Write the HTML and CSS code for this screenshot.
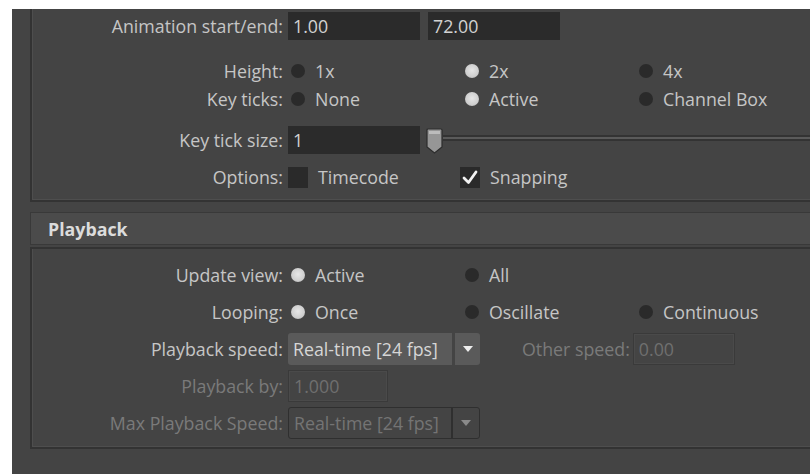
FILE: index.html
```html
<!DOCTYPE html>
<html lang="en">
<head>
<meta charset="utf-8">
<title>Time Slider Preferences</title>
<link rel="stylesheet" href="styles.css">
</head>
<body>
<div class="screen">
  <div class="frame frame-top">
    <div class="row r-anim">
      <span class="label">Animation start/end:</span>
      <div class="ctrl">
        <span class="field w132">1.00</span>
        <span class="field w132 ml8">72.00</span>
      </div>
    </div>
    <div class="row r-height">
      <span class="label">Height:</span>
      <div class="ctrl">
        <span class="choice"><i class="dot"></i>1x</span>
        <span class="choice"><i class="dot on"></i>2x</span>
        <span class="choice"><i class="dot"></i>4x</span>
      </div>
    </div>
    <div class="row">
      <span class="label">Key ticks:</span>
      <div class="ctrl">
        <span class="choice"><i class="dot"></i>None</span>
        <span class="choice"><i class="dot on"></i>Active</span>
        <span class="choice"><i class="dot"></i>Channel Box</span>
      </div>
    </div>
    <div class="row r-tick">
      <span class="label">Key tick size:</span>
      <div class="ctrl">
        <span class="field w132">1</span>
        <div class="slider">
          <svg class="handle" width="17" height="26" viewBox="0 0 17 26">
            <path d="M2 1 H15 Q16 1 16 2 V19 L8.5 25 L1 19 V2 Q1 1 2 1 Z" fill="#969696" stroke="#2c2c2c" stroke-width="1.2"/>
            <path d="M3 3 H14 V6 H3 Z" fill="#bcbcbc"/>
          </svg>
          <span class="track"></span>
        </div>
      </div>
    </div>
    <div class="row r-opts">
      <span class="label">Options:</span>
      <div class="ctrl">
        <span class="choice cb"><i class="check"></i>Timecode</span>
        <span class="choice cb"><i class="check">
          <svg width="20" height="21" viewBox="0 0 20 21"><path d="M4 11 L8.5 15.5 L16 5" fill="none" stroke="#f2f2f2" stroke-width="2.8" stroke-linecap="round" stroke-linejoin="round"/></svg>
        </i>Snapping</span>
      </div>
    </div>
  </div>

  <div class="section-head">Playback</div>

  <div class="frame frame-play">
    <div class="row pr">
      <span class="label">Update view:</span>
      <div class="ctrl">
        <span class="choice"><i class="dot on"></i>Active</span>
        <span class="choice"><i class="dot"></i>All</span>
      </div>
    </div>
    <div class="row pr">
      <span class="label">Looping:</span>
      <div class="ctrl">
        <span class="choice"><i class="dot on"></i>Once</span>
        <span class="choice"><i class="dot"></i>Oscillate</span>
        <span class="choice"><i class="dot"></i>Continuous</span>
      </div>
    </div>
    <div class="row pr">
      <span class="label">Playback speed:</span>
      <div class="ctrl">
        <span class="combo">
          <span class="combo-text">Real-time [24 fps]</span>
          <span class="combo-btn"><i class="arrow"></i></span>
        </span>
        <span class="label dim other">Other speed:</span>
        <span class="field off w102">0.00</span>
      </div>
    </div>
    <div class="row pr">
      <span class="label dim">Playback by:</span>
      <div class="ctrl">
        <span class="field off w100">1.000</span>
      </div>
    </div>
    <div class="row pr">
      <span class="label dim">Max Playback Speed:</span>
      <div class="ctrl">
        <span class="combo off">
          <span class="combo-text">Real-time [24 fps]</span>
          <span class="combo-btn"><i class="arrow"></i></span>
        </span>
      </div>
    </div>
  </div>
</div>
</body>
</html>
```

FILE: styles.css
```css
* { box-sizing: border-box; }

html, body {
  margin: 0;
  background: #ffffff;
  overflow: hidden;
}

.screen {
  margin: 9px 0 0 12px;
  height: 465px;
  background: #444444;
  overflow: hidden;
  font-family: "Open Sans", "Liberation Sans", sans-serif;
  font-size: 17.8px;
  color: #c6c6c6;
}

/* framed group boxes, open on the right where the window is cut */
.frame {
  margin-left: 18px;
  border-left: 2px solid #333333;
  border-bottom: 2px solid #333333;
  box-shadow: inset 1px 0 0 #4e4e4e, inset 0 -1px 0 #4e4e4e;
  display: flex;
  flex-direction: column;
}

.frame-top { padding: 3px 0 9px; }

.frame-play {
  margin-top: 2px;
  border-top: 2px solid #333333;
  padding: 7px 0 6px;
}

.section-head {
  margin: 10px 0 0 18px;
  height: 33px;
  padding-left: 17px;
  background: #4b4b4b;
  border: 1px solid #393939;
  border-right: 0;
  display: flex;
  align-items: center;
  font-weight: bold;
  color: #dcdcdc;
}

/* label / control rows */
.row {
  display: grid;
  grid-template-columns: 251px 1fr;
  column-gap: 5px;
  align-items: center;
  height: 28px;
  min-width: 0;
}
.r-height { margin-top: 17px; }
.r-tick { margin-top: 13px; }
.r-opts { margin-top: 9px; }
.row.pr { height: 37px; }

.label {
  text-align: right;
  white-space: nowrap;
}
.dim { color: #7a7a7a; }

.ctrl {
  display: flex;
  align-items: center;
  height: 100%;
  min-width: 0;
  overflow: hidden;
}

/* text fields */
.field {
  height: 28px;
  padding-left: 5px;
  display: flex;
  align-items: center;
  background: #2b2b2b;
  color: #d2d2d2;
  flex: none;
}
.w132 { width: 132px; }
.w102 { width: 102px; }
.w100 { width: 100px; }
.ml8 { margin-left: 8px; }
.field.off {
  height: 32px;
  background: #444444;
  border: 1px solid #3a3a3a;
  box-shadow: inset 0 0 0 1px #4a4a4a;
  color: #6f6f6f;
}

/* radio and check choices */
.choice {
  width: 174px;
  display: flex;
  align-items: center;
  white-space: nowrap;
  flex: none;
}
.choice.cb { width: 172px; }

.dot {
  width: 14px;
  height: 14px;
  margin: 0 10px 0 3px;
  border-radius: 50%;
  background: #2a2a2a;
  flex: none;
}
.dot.on {
  background: radial-gradient(circle at 50% 45%, #e6e6e6 0, #cfcfcf 60%, #a9a9a9 100%);
}

.check {
  width: 20px;
  height: 21px;
  margin-right: 10px;
  background: #2a2a2a;
  flex: none;
  display: flex;
}

/* key tick size slider */
.slider {
  flex: 1;
  display: flex;
  align-items: center;
  height: 28px;
  margin-left: 6px;
}
.handle { flex: none; margin-top: 2px; }
.track {
  flex: 1;
  height: 6px;
  margin-top: -4px;
  border-top: 2px solid #333333;
  border-bottom: 2px solid #333333;
  background: #5a5a5a;
}

/* option menus */
.combo {
  width: 192px;
  height: 32px;
  display: flex;
  background: #5a5a5a;
  border-radius: 3px;
  color: #d6d6d6;
  flex: none;
}
.combo-text {
  flex: 1;
  padding-left: 5px;
  display: flex;
  align-items: center;
  white-space: nowrap;
}
.combo-btn {
  width: 28px;
  border-left: 3px solid #444444;
  display: flex;
  align-items: center;
  justify-content: center;
}
.arrow {
  width: 0;
  height: 0;
  border-left: 5px solid transparent;
  border-right: 5px solid transparent;
  border-top: 6px solid #eeeeee;
}
.combo.off {
  background: #444444;
  border: 1px solid #2f2f2f;
  color: #747474;
}
.combo.off .combo-btn { border-left: 2px solid #2f2f2f; }
.combo.off .arrow { border-top-color: #8a8a8a; }

.other {
  margin-left: 42px;
  margin-right: 3px;
}
```
